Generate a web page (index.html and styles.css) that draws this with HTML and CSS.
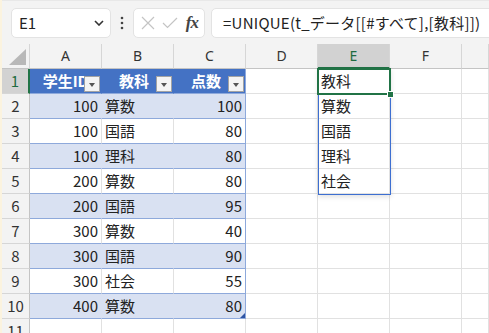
FILE: index.html
```html
<!DOCTYPE html>
<html lang="ja">
<head>
    <meta charset="UTF-8">
    <title>UNIQUE</title>
    <link rel="stylesheet" href="styles.css">
</head>
<body>
<div class="app">
    <div class="edge"></div>
    <div class="main">
        <!--数式バー-->
        <div class="bar">
            <div class="namebox">
                <span>E1</span>
                <svg width="10" height="6" viewBox="0 0 10 6"><path d="M1 1 L5 5 L9 1" fill="none" stroke="#333" stroke-width="1.6"/></svg>
            </div>
            <div class="dots">
                <svg width="4" height="14" viewBox="0 0 4 14"><circle cx="2" cy="2" r="1.3" fill="#444"/><circle cx="2" cy="7" r="1.3" fill="#444"/><circle cx="2" cy="12" r="1.3" fill="#444"/></svg>
            </div>
            <div class="fxbox">
                <svg width="14" height="14" viewBox="0 0 14 14"><path d="M1 1 L13 13 M13 1 L1 13" stroke="#c4c4c4" stroke-width="1.2"/></svg>
                <svg width="16" height="12" viewBox="0 0 16 12"><path d="M1 6 L5.5 10.5 L15 1" fill="none" stroke="#c4c4c4" stroke-width="1.2"/></svg>
                <span class="fx">fx</span>
            </div>
            <div class="formula">=UNIQUE(t_データ[[#すべて],[教科]])</div>
        </div>

        <!--シート-->
        <div class="sheet">
            <div class="row hrow">
                <div class="corner"><svg width="18" height="16" viewBox="0 0 18 16"><path d="M17 0 L17 16 L0 16 Z" fill="#b8b8b8"/></svg></div>
                <div class="ch">A</div><div class="ch">B</div><div class="ch">C</div><div class="ch">D</div><div class="ch sel">E</div><div class="ch">F</div><div class="ch"></div>
            </div>
            <div class="row">
                <div class="rh sel">1</div>
                <div class="th">学生ID<i class="flt"></i></div><div class="th">教科<i class="flt"></i></div><div class="th">点数<i class="flt"></i></div>
                <div class="c"></div><div class="c l">教科</div><div class="c"></div><div class="c"></div>
            </div>
            <div class="row band">
                <div class="rh">2</div>
                <div class="t r">100</div><div class="t l">算数</div><div class="t r last">100</div>
                <div class="c"></div><div class="c l">算数</div><div class="c"></div><div class="c"></div>
            </div>
            <div class="row">
                <div class="rh">3</div>
                <div class="t r">100</div><div class="t l">国語</div><div class="t r last">80</div>
                <div class="c"></div><div class="c l">国語</div><div class="c"></div><div class="c"></div>
            </div>
            <div class="row band">
                <div class="rh">4</div>
                <div class="t r">100</div><div class="t l">理科</div><div class="t r last">80</div>
                <div class="c"></div><div class="c l">理科</div><div class="c"></div><div class="c"></div>
            </div>
            <div class="row">
                <div class="rh">5</div>
                <div class="t r">200</div><div class="t l">算数</div><div class="t r last">80</div>
                <div class="c"></div><div class="c l">社会</div><div class="c"></div><div class="c"></div>
            </div>
            <div class="row band">
                <div class="rh">6</div>
                <div class="t r">200</div><div class="t l">国語</div><div class="t r last">95</div>
                <div class="c"></div><div class="c"></div><div class="c"></div><div class="c"></div>
            </div>
            <div class="row">
                <div class="rh">7</div>
                <div class="t r">300</div><div class="t l">算数</div><div class="t r last">40</div>
                <div class="c"></div><div class="c"></div><div class="c"></div><div class="c"></div>
            </div>
            <div class="row band">
                <div class="rh">8</div>
                <div class="t r">300</div><div class="t l">国語</div><div class="t r last">90</div>
                <div class="c"></div><div class="c"></div><div class="c"></div><div class="c"></div>
            </div>
            <div class="row">
                <div class="rh">9</div>
                <div class="t r">300</div><div class="t l">社会</div><div class="t r last">55</div>
                <div class="c"></div><div class="c"></div><div class="c"></div><div class="c"></div>
            </div>
            <div class="row band">
                <div class="rh">10</div>
                <div class="t r">400</div><div class="t l">算数</div><div class="t r last end">80</div>
                <div class="c"></div><div class="c"></div><div class="c"></div><div class="c"></div>
            </div>
            <div class="row">
                <div class="rh">11</div>
                <div class="c"></div><div class="c"></div><div class="c"></div>
                <div class="c"></div><div class="c"></div><div class="c"></div><div class="c"></div>
            </div>

            <!--スピル範囲と選択セル-->
            <div class="spill"></div>
            <div class="cursor"><i class="handle"></i></div>
        </div>
    </div>
</div>
</body>
</html>
```

FILE: styles.css
```css
html,
body {
    margin: 0;
    padding: 0;
}

body {
    width: 489px;
    height: 333px;
    overflow: hidden;
    background: #fff;
    font-family: "Noto Sans CJK JP", "Noto Sans", sans-serif;
    color: #222;
}

.app {
    display: flex;
    height: 333px;
}

/*左端の帯*/
.edge {
    flex: none;
    width: 2px;
    background: #fbf3df;
}

.main {
    flex: 1;
    min-width: 0;
    overflow: hidden;
}

/*1.数式バー*/
.bar {
    display: flex;
    align-items: center;
    height: 44px;
    padding-left: 9px;
    background: #f3f3f3;
    box-sizing: border-box;
    border-top: 1px solid #e8e8e8;
}

.namebox,
.fxbox,
.formula {
    height: 30px;
    background: #fff;
    border: 1px solid #e3e3e3;
    border-radius: 5px;
    box-sizing: border-box;
    display: flex;
    align-items: center;
}

.namebox {
    width: 100px;
    justify-content: space-between;
    padding: 0 6px 0 7px;
    font-size: 15px;
}

.dots {
    width: 22px;
    display: flex;
    justify-content: center;
}

.fxbox {
    width: 72px;
    padding: 0 6px 0 7px;
    justify-content: space-between;
}

.fx {
    font: italic bold 17px/1 "Liberation Serif", serif;
    color: #444;
    letter-spacing: -1px;
}

.formula {
    flex: 1;
    margin-left: 6px;
    margin-right: -10px;
    padding-left: 11px;
    font-size: 15px;
    letter-spacing: .25px;
    white-space: nowrap;
}

/*2.シート*/
.sheet {
    position: relative;
}

.row {
    display: grid;
    grid-template-columns: 28px repeat(6, 72px) 1fr;
    height: 25px;
}

.row > div {
    position: relative;
    box-sizing: border-box;
    border-right: 1px solid #e1e1e1;
    border-bottom: 1px solid #e1e1e1;
    padding: 0 3px;
    font-size: 15px;
    line-height: 24px;
    white-space: nowrap;
    overflow: hidden;
}

/*列見出し*/
.hrow > div {
    background: #f3f3f3;
    border-right-color: #d6d6d6;
    border-bottom-color: #c4c4c4;
    text-align: center;
    font: 14px/24px "Noto Sans", sans-serif;
    color: #333;
}

.hrow > .corner {
    display: flex;
    align-items: flex-end;
    justify-content: flex-end;
    padding: 0 2px 3px 0;
}

.hrow > .sel {
    background: #d2d2d2;
    border-bottom: 2px solid #217346;
    color: #1e6b41;
}

/*行見出し*/
.row > .rh {
    background: #f3f3f3;
    border-right-color: #c4c4c4;
    border-bottom-color: #d6d6d6;
    text-align: center;
    padding: 0;
    color: #333;
}

.row > .rh.sel {
    background: #d2d2d2;
    border-right: 2px solid #217346;
    color: #1e6b41;
}

/*テーブル*/
.row > .th {
    background: #4472c4;
    border-right-color: #4472c4;
    border-bottom-color: #8ea9db;
    color: #fff;
    font-weight: bold;
    text-align: center;
    padding-right: 10px;
}

.row > .th:nth-child(2) {
    padding-left: 10px;
}

.row > .th:nth-child(4) {
    border-right-color: #8ea9db;
}

.flt {
    position: absolute;
    right: 1px;
    bottom: 1px;
    width: 16px;
    height: 16px;
    box-sizing: border-box;
    background: #f4f4f4;
    border: 1px solid #a3a3a3;
}

.flt::after {
    content: "";
    position: absolute;
    left: 4px;
    top: 6px;
    border-left: 3.5px solid transparent;
    border-right: 3.5px solid transparent;
    border-top: 4px solid #555;
}

.row > .t {
    border-bottom-color: #8ea9db;
}

.band > .t {
    background: #d9e1f2;
    border-right-color: #d9e1f2;
}

.row > .last {
    border-right-color: #8ea9db;
}

.end::after {
    content: "";
    position: absolute;
    right: 0;
    bottom: 0;
    border-left: 5px solid transparent;
    border-bottom: 5px solid #2f55a4;
}

.r {
    text-align: right;
}

.l {
    text-align: left;
}

/*スピル範囲*/
.spill {
    position: absolute;
    left: 316px;
    top: 24px;
    width: 73px;
    height: 127px;
    box-sizing: border-box;
    border: 1px solid #3d6fd1;
    box-shadow: 0 2px 5px rgba(0, 0, 0, .12);
}

/*選択セル*/
.cursor {
    position: absolute;
    left: 315px;
    top: 24px;
    width: 74px;
    height: 27px;
    box-sizing: border-box;
    border: 2px solid #217346;
}

.handle {
    position: absolute;
    right: -5px;
    bottom: -5px;
    width: 7px;
    height: 7px;
    box-sizing: border-box;
    background: #217346;
    border: 1px solid #fff;
}
```
